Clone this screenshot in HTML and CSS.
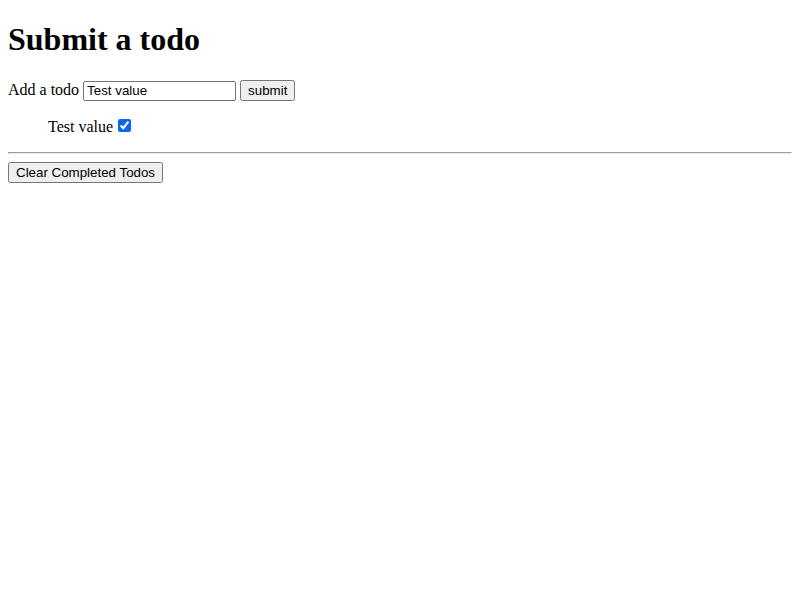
FILE: index.html
```html
<!DOCTYPE html>
<html>
<head>
<meta charset="utf-8">
<title>Todos</title>
<link rel="stylesheet" href="styles.css">
</head>
<body>
<h1 class="title">Submit a todo</h1>
<form class="todo-form">
<label for="todo">Add a todo</label>
<input id="todo" class="todo-input" type="text" value="Test value">
<button type="button" class="btn">submit</button>
</form>
<ul class="todo-list">
<li class="todo-item">Test value <input type="checkbox" class="todo-check" checked></li>
</ul>
<hr class="divider">
<button type="button" class="btn">Clear Completed Todos</button>
</body>
</html>
```
FILE: styles.css
```css
html {
  margin: 0;
  padding: 0;
}
body {
  font-family: "Liberation Serif", "Times New Roman", serif;
  margin: 0 8px 8px;
  padding: 0;
  color: #000;
  background: #fff;
}
.title {
  font-size: 32px;
  line-height: 37px;
  font-weight: bold;
  margin: 21px 0 22px;
}
.todo-input,
.btn {
  font-family: "Liberation Sans", Arial, sans-serif;
  font-size: 13.333px;
}
.todo-input {
  box-sizing: border-box;
  width: 153px;
  height: 20px;
}
.todo-list {
  list-style: none;
  padding-left: 40px;
  margin: 15px 0 16px;
}
.todo-check {
  accent-color: #0a66f0;
  margin-left: 1px;
}
.divider {
  margin: 8px 0;
}
```
